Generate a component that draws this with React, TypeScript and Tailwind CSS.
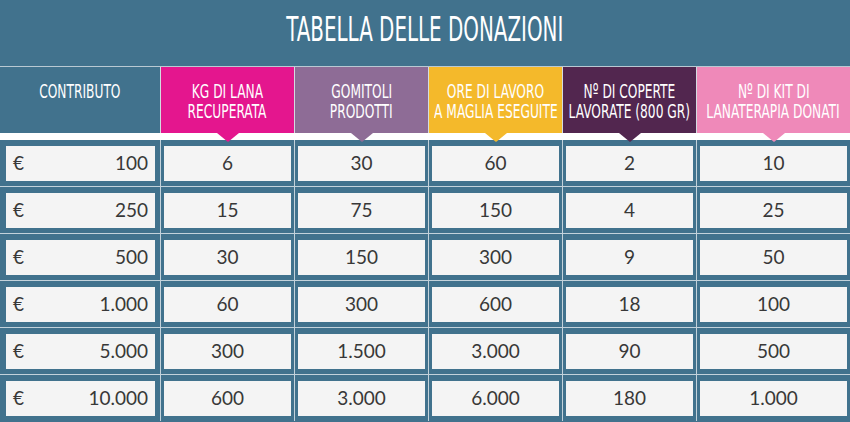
import React from "react";

const headers = [
  { lines: ["CONTRIBUTO"], bg: "bg-[#41728d]", arrow: "", border: "" },
  { lines: ["KG DI LANA", "RECUPERATA"], bg: "bg-[#e4168e]", arrow: "border-t-[#e4168e]", border: "border-l border-[#d3dbe1]" },
  { lines: ["GOMITOLI", "PRODOTTI"], bg: "bg-[#8e6c96]", arrow: "border-t-[#8e6c96]", border: "border-l border-[#d3dbe1]" },
  { lines: ["ORE DI LAVORO", "A MAGLIA ESEGUITE"], bg: "bg-[#f4b92b]", arrow: "border-t-[#f4b92b]", border: "border-l border-[#d3dbe1]" },
  { lines: ["Nº DI COPERTE", "LAVORATE (800 GR)"], bg: "bg-[#52264f]", arrow: "border-t-[#52264f]", border: "border-l border-[#d3dbe1]" },
  { lines: ["Nº DI KIT DI", "LANATERAPIA DONATI"], bg: "bg-[#ef89b9]", arrow: "border-t-[#ef89b9]", border: "border-l border-[#d3dbe1]" },
];

const rows = [
  ["100", "6", "30", "60", "2", "10"],
  ["250", "15", "75", "150", "4", "25"],
  ["500", "30", "150", "300", "9", "50"],
  ["1.000", "60", "300", "600", "18", "100"],
  ["5.000", "300", "1.500", "3.000", "90", "500"],
  ["10.000", "600", "3.000", "6.000", "180", "1.000"],
];

const cols = "grid grid-cols-[160px_134px_134px_134px_134px_154px]";
const narrow = "font-['DejaVu_Sans_Condensed','Liberation_Sans',sans-serif]";
const body = "font-['Lato','Open_Sans',sans-serif]";

export default function App() {
  return (
    <div className="w-[850px] h-[422px] bg-[#41728d] overflow-hidden">
      <div className={`h-[66px] flex justify-center pt-[13px] ${narrow}`}>
        <span className="inline-block whitespace-nowrap text-white text-[33px] leading-[33px] scale-x-[0.67]">
          TABELLA DELLE DONAZIONI
        </span>
      </div>
      <div className={`${cols} border-t border-[#b9c9d3]`}>
        {headers.map((h, i) => (
          <div key={i} className={`relative h-[66px] pt-[14px] ${h.bg} ${h.border} ${narrow}`}>
            {h.lines.map((l, j) => (
              <div key={j} className="flex justify-center h-[20px]">
                <span className="inline-block whitespace-nowrap text-white text-[20px] leading-[20px] scale-x-[0.68]">
                  {l}
                </span>
              </div>
            ))}
            {h.arrow && (
              <div
                className={`absolute top-full left-1/2 -translate-x-1/2 w-0 h-0 border-l-[11px] border-r-[11px] border-t-[9px] border-l-transparent border-r-transparent ${h.arrow} z-10`}
              />
            )}
          </div>
        ))}
      </div>
      <div className="h-[7px] bg-white" />
      <div>
        {rows.map((r, i) => (
          <div key={i} className={`${cols} ${i < rows.length - 1 ? "border-b border-[#c3d2db]" : ""}`}>
            {r.map((v, j) =>
              j === 0 ? (
                <div key={j} className="pl-[6px] pr-[5px] pt-[6px] pb-[5px]">
                  <div className={`h-[35px] bg-[#f4f4f4] flex items-center justify-between px-[7px] text-[19px] text-[#383838] ${body}`}>
                    <span>€</span>
                    <span>{v}</span>
                  </div>
                </div>
              ) : (
                <div key={j} className="border-l border-[#c3d2db] px-[3px] pt-[6px] pb-[5px]">
                  <div className={`h-[35px] bg-[#f4f4f4] flex items-center justify-center text-[19px] text-[#383838] ${body}`}>
                    {v}
                  </div>
                </div>
              )
            )}
          </div>
        ))}
      </div>
    </div>
  );
}
